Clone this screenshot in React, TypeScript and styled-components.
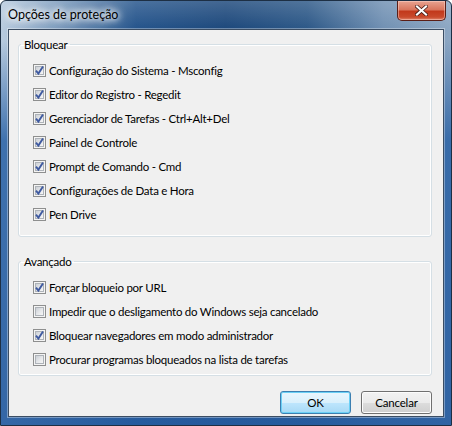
import styled, { createGlobalStyle } from "styled-components";

const GlobalStyle = createGlobalStyle`
    html, body {
        margin: 0;
        padding: 0;
        background: #ffffff;
    }
    * {
        box-sizing: border-box;
    }
`;

const uiFont = `"Lato", "Noto Sans", sans-serif`;

const Frame = styled.div`
    width: 452px;
    height: 426px;
    display: flex;
    flex-direction: column;
    padding: 0 7px 8px 7px;
    border: 1px solid #1d2f44;
    border-radius: 6px 6px 0 0;
    background:
        linear-gradient(to bottom, rgba(42, 98, 165, 0) 0px, rgba(42, 98, 165, 0) 40px, rgba(42, 98, 165, 0.85) 140px, rgba(38, 92, 160, 0.9) 100%),
        linear-gradient(to bottom, rgba(255, 255, 255, 0.18) 0px, rgba(255, 255, 255, 0) 30px),
        linear-gradient(to right, #b8cbdf 0%, #7e9dbe 12%, #22528a 30%, #1a467a 50%, #2a5686 68%, #6f8fb2 85%, #8ca6c2 100%);
    font-family: ${uiFont};
`;

const TitleBar = styled.div`
    height: 28px;
    display: flex;
    justify-content: space-between;
    align-items: flex-start;
`;

const Caption = styled.div`
    margin-top: 6px;
    font-size: 12.5px;
    color: #000000;
    text-shadow: 0 0 6px #ffffff, 0 0 8px #ffffff, 0 0 10px #ffffff;
`;

const CloseButton = styled.div`
    width: 49px;
    height: 20px;
    margin-right: -2px;
    border: 1px solid #5a1e16;
    border-top: none;
    border-radius: 0 0 5px 5px;
    background: linear-gradient(to bottom, #e8a391 0%, #d9765e 45%, #c2391c 55%, #c94a2c 85%, #e0876f 100%);
    box-shadow: inset 0 0 0 1px rgba(255, 220, 210, 0.45);
    display: flex;
    align-items: center;
    justify-content: center;
`;

const Client = styled.div`
    flex: 1;
    display: flex;
    flex-direction: column;
    padding: 7px 11px 0 9px;
    border: 1px solid #3b4d63;
    background: #f0f0f0;
    box-shadow: 0 0 0 1px rgba(255, 255, 255, 0.35);
`;

const Group = styled.fieldset<{ $bottom: number; $top?: number }>`
    margin: ${(p) => p.$top ?? 0}px 0 0 0;
    padding: 0 2px ${(p) => p.$bottom}px 2px;
    border: 1px solid #d5dfe5;
    border-radius: 3px;
    box-shadow: inset 0 0 0 1px #ffffff;
    min-width: 0;
`;

const Legend = styled.legend`
    padding: 0 3px 0 3px;
    font-size: 11.5px;
    letter-spacing: -0.25px;
    line-height: 15px;
    color: #000000;
`;

const Rows = styled.div`
    display: flex;
    flex-direction: column;
    padding: 6px 0 0 12px;
`;

const Row = styled.label`
    height: 24px;
    display: flex;
    align-items: center;
    gap: 3px;
    font-size: 11.5px;
    letter-spacing: -0.25px;
    color: #000000;
    white-space: nowrap;
`;

const Box = styled.span<{ $checked: boolean }>`
    width: 13px;
    height: 13px;
    flex: none;
    position: relative;
    border: 1px solid #8e8f8f;
    background: #f4f4f4;
    display: flex;
    align-items: center;
    justify-content: center;
    &::before {
        content: "";
        position: absolute;
        inset: 1px;
        border: 1px solid #aeb3b9;
        background: linear-gradient(135deg, #cbcfd5 0%, #e4e6e9 50%, #f6f6f6 100%);
    }
    svg {
        position: relative;
    }
`;

const Footer = styled.div`
    display: flex;
    justify-content: flex-end;
    gap: 10px;
    margin-top: 15px;
`;

const Button = styled.button<{ $default?: boolean }>`
    width: 71px;
    height: 23px;
    padding: 0;
    font-family: ${uiFont};
    font-size: 11.5px;
    letter-spacing: -0.2px;
    color: #000000;
    border-radius: 3px;
    border: 1px solid ${(p) => (p.$default ? "#3c7fb1" : "#707070")};
    background: ${(p) =>
        p.$default
            ? "linear-gradient(to bottom, #eaf6fd 0%, #d9f0fc 50%, #bee6fd 51%, #a7d9f5 100%)"
            : "linear-gradient(to bottom, #f2f2f2 0%, #ebebeb 50%, #dddddd 51%, #cfcfcf 100%)"};
    box-shadow: inset 0 0 0 1px ${(p) => (p.$default ? "#6bd0f5" : "#fcfcfc")};
`;

interface IOption {
    label: string;
    checked: boolean;
}

const blocks: IOption[] = [
    { label: "Configuração do Sistema - Msconfig", checked: true },
    { label: "Editor do Registro - Regedit", checked: true },
    { label: "Gerenciador de Tarefas - Ctrl+Alt+Del", checked: true },
    { label: "Painel de Controle", checked: true },
    { label: "Prompt de Comando - Cmd", checked: true },
    { label: "Configurações de Data e Hora", checked: true },
    { label: "Pen Drive", checked: true },
];

const advanced: IOption[] = [
    { label: "Forçar bloqueio por URL", checked: true },
    { label: "Impedir que o desligamento do Windows seja cancelado", checked: false },
    { label: "Bloquear navegadores em modo administrador", checked: true },
    { label: "Procurar programas bloqueados na lista de tarefas", checked: false },
];

function CheckBox({ checked }: { checked: boolean }) {
    return (
        <Box $checked={checked}>
            {checked && (
                <svg width="9" height="9" viewBox="0 0 9 9">
                    <path d="M1 4.6 L3.4 7.6 L8 0.6" fill="none" stroke="#3f5aa0" strokeWidth="1.9" />
                </svg>
            )}
        </Box>
    );
}

function App() {
    return (
        <>
            <GlobalStyle />
            <Frame>
                <TitleBar>
                    <Caption>Opções de proteção</Caption>
                    <CloseButton>
                        <svg width="13" height="11" viewBox="0 0 13 11">
                            <path d="M2 1.5 L11 9.5 M11 1.5 L2 9.5" stroke="#3b1510" strokeWidth="3.6" strokeLinecap="square" />
                            <path d="M2 1.5 L11 9.5 M11 1.5 L2 9.5" stroke="#ffffff" strokeWidth="2.2" strokeLinecap="square" />
                        </svg>
                    </CloseButton>
                </TitleBar>
                <Client>
                    <Group $bottom={10}>
                        <Legend>Bloquear</Legend>
                        <Rows>
                            {blocks.map((o) => (
                                <Row key={o.label}>
                                    <CheckBox checked={o.checked} />
                                    {o.label}
                                </Row>
                            ))}
                        </Rows>
                    </Group>
                    <Group $bottom={4} $top={17}>
                        <Legend>Avançado</Legend>
                        <Rows>
                            {advanced.map((o) => (
                                <Row key={o.label}>
                                    <CheckBox checked={o.checked} />
                                    {o.label}
                                </Row>
                            ))}
                        </Rows>
                    </Group>
                    <Footer>
                        <Button $default>OK</Button>
                        <Button>Cancelar</Button>
                    </Footer>
                </Client>
            </Frame>
        </>
    );
}

export default App;
